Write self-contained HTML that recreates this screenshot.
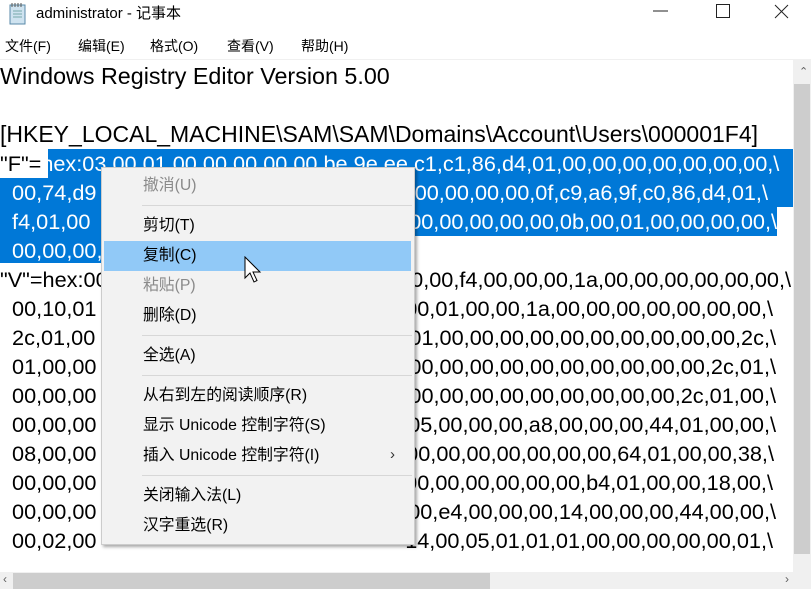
<!DOCTYPE html>
<html><head><meta charset="utf-8"><style>
*{margin:0;padding:0;box-sizing:border-box}
body{width:811px;height:589px;overflow:hidden;background:#fff;position:relative;font-family:"Liberation Sans","Noto Sans CJK SC",sans-serif}
.t{position:absolute;left:36px;top:2px;font-size:15px;color:#000}
.mb{position:absolute;top:36px;font-size:14px;color:#000}
.edit{position:absolute;left:0;top:59px;width:793px;height:513px;overflow:hidden;border-top:1px solid #f0f0f0}
.ln{position:absolute;left:0;height:29px;line-height:29px;font-size:21.7px;white-space:pre;color:#000}
.r{position:absolute;height:29px;line-height:29px;font-size:21.7px;white-space:pre;color:#000;text-align:right}
.sel{position:absolute;background:#0078d7}
.w{color:#fff}
.menu{position:absolute;left:101px;top:167px;width:314px;height:378px;background:#f2f2f2;border:1px solid #ccc;box-shadow:2px 2px 3px rgba(0,0,0,.35);z-index:5}
.it{position:absolute;left:41px;font-size:15.8px;color:#000;line-height:20px}
.dis{color:#8a8a8a}
.sep{position:absolute;left:40px;right:2px;height:1px;background:#d7d7d7}
</style></head><body>
<svg style="position:absolute;left:8px;top:2px" width="20" height="24" viewBox="0 0 20 24"><rect x="2" y="3" width="15" height="19" fill="#cfe3f0" stroke="#5a8aa8"/><g stroke="#7aa" stroke-width="1"><line x1="5" y1="9" x2="14" y2="9"/><line x1="5" y1="12" x2="14" y2="12"/><line x1="5" y1="15" x2="14" y2="15"/></g><path d="M4 1v4M7 1v4M10 1v4M13 1v4" stroke="#555"/></svg>
<div class="t">administrator - 记事本</div>
<svg style="position:absolute;left:652px;top:0" width="159" height="24"><line x1="1" y1="11" x2="16" y2="11" stroke="#222"/><rect x="64.5" y="4.5" width="13" height="13" fill="none" stroke="#222"/><path d="M123 5l13 13M136 5l-13 13" stroke="#222"/></svg>
<div class="mb" style="left:5px">文件(F)</div>
<div class="mb" style="left:78px">编辑(E)</div>
<div class="mb" style="left:150px">格式(O)</div>
<div class="mb" style="left:227px">查看(V)</div>
<div class="mb" style="left:301px">帮助(H)</div>

<div class="edit">
<div class="sel" style="left:48px;top:89px;width:745px;height:29px"></div>
<div class="sel" style="left:0;top:118px;width:793px;height:29px"></div>
<div class="sel" style="left:0;top:147px;width:777px;height:29px"></div>
<div class="sel" style="left:0;top:176px;width:300px;height:27px"></div>
<div class="ln" style="top:2px;font-size:23.3px">Windows Registry Editor Version 5.00</div>
<div class="ln" style="top:60px;font-size:23px">[HKEY_LOCAL_MACHINE\SAM\SAM\Domains\Account\Users\000001F4]</div>
<div class="ln" style="top:89px">"F"=<span class="w">hex:03,00,01,00,00,00,00,00,be,9e,ee,c1,c1,86,d4,01,00,00,00,00,00,00,00,\</span></div>
<div class="ln w" style="top:118px">  00,74,d9</div><div class="r w" style="top:118px;right:25px">00,00,00,00,0f,c9,a6,9f,c0,86,d4,01,\</div>
<div class="ln w" style="top:147px">  f4,01,00</div><div class="r w" style="top:147px;right:16px">00,00,00,00,00,0b,00,01,00,00,00,00,\</div>
<div class="ln w" style="top:176px">  00,00,00,00</div>
<div class="ln" style="top:205px">"V"=hex:00</div><div class="r" style="top:205px;right:2px">00,00,f4,00,00,00,1a,00,00,00,00,00,00,\</div>
<div class="ln" style="top:234px">  00,10,01</div><div class="r" style="top:234px;right:20px">00,01,00,00,1a,00,00,00,00,00,00,00,\</div>
<div class="ln" style="top:263px">  2c,01,00</div><div class="r" style="top:263px;right:17px">01,00,00,00,00,00,00,00,00,00,00,2c,\</div>
<div class="ln" style="top:292px">  01,00,00</div><div class="r" style="top:292px;right:17px">00,00,00,00,00,00,00,00,00,00,2c,01,\</div>
<div class="ln" style="top:321px">  00,00,00</div><div class="r" style="top:321px;right:17px">00,00,00,00,00,00,00,00,00,2c,01,00,\</div>
<div class="ln" style="top:350px">  00,00,00</div><div class="r" style="top:350px;right:17px">05,00,00,00,a8,00,00,00,44,01,00,00,\</div>
<div class="ln" style="top:379px">  08,00,00</div><div class="r" style="top:379px;right:19px">00,00,00,00,00,00,00,00,64,01,00,00,38,\</div>
<div class="ln" style="top:408px">  00,00,00</div><div class="r" style="top:408px;right:20px">00,00,00,00,00,00,00,b4,01,00,00,18,00,\</div>
<div class="ln" style="top:437px">  00,00,00</div><div class="r" style="top:437px;right:17px">00,e4,00,00,00,14,00,00,00,44,00,00,\</div>
<div class="ln" style="top:466px">  00,02,00</div><div class="r" style="top:466px;right:20px">14,00,05,01,01,01,00,00,00,00,00,01,\</div>
</div>

<div style="position:absolute;left:793px;top:59px;width:18px;height:513px;background:#f0f0f0"></div>
<div style="position:absolute;left:794px;top:84px;width:16px;height:470px;background:#cdcdcd"></div>
<div style="position:absolute;left:799px;top:65px;font-size:11px;color:#606060">&#x2303;</div>
<div style="position:absolute;left:0;top:572px;width:811px;height:17px;background:#f0f0f0"></div>
<div style="position:absolute;left:13px;top:573px;width:477px;height:16px;background:#cdcdcd"></div>
<div style="position:absolute;left:3px;top:572px;font-size:12px;color:#606060">‹</div>
<div style="position:absolute;left:785px;top:572px;font-size:12px;color:#606060">›</div>

<div class="menu">
<div class="it dis" style="top:8px">撤消(U)</div>
<div class="sep" style="top:37px"></div>
<div class="it" style="top:48px">剪切(T)</div>
<div style="position:absolute;left:2px;top:73px;width:307px;height:30px;background:#91c9f7"></div>
<div class="it" style="top:78px">复制(C)</div>
<div class="it dis" style="top:108px">粘贴(P)</div>
<div class="it" style="top:138px">删除(D)</div>
<div class="sep" style="top:167px"></div>
<div class="it" style="top:178px">全选(A)</div>
<div class="sep" style="top:207px"></div>
<div class="it" style="top:218px">从右到左的阅读顺序(R)</div>
<div class="it" style="top:248px">显示 Unicode 控制字符(S)</div>
<div class="it" style="top:278px">插入 Unicode 控制字符(I)</div>
<div style="position:absolute;left:288px;top:278px;font-size:15px;color:#333">›</div>
<div class="sep" style="top:307px"></div>
<div class="it" style="top:318px">关闭输入法(L)</div>
<div class="it" style="top:348px">汉字重选(R)</div>
</div>
<svg style="position:absolute;left:244px;top:256px;z-index:6" width="20" height="28" viewBox="0 0 20 28"><path d="M1 1v21l5-5 4 9 3-1.5-4-8.5h7z" fill="#fff" stroke="#000" stroke-width="1"/></svg>
</body></html>
